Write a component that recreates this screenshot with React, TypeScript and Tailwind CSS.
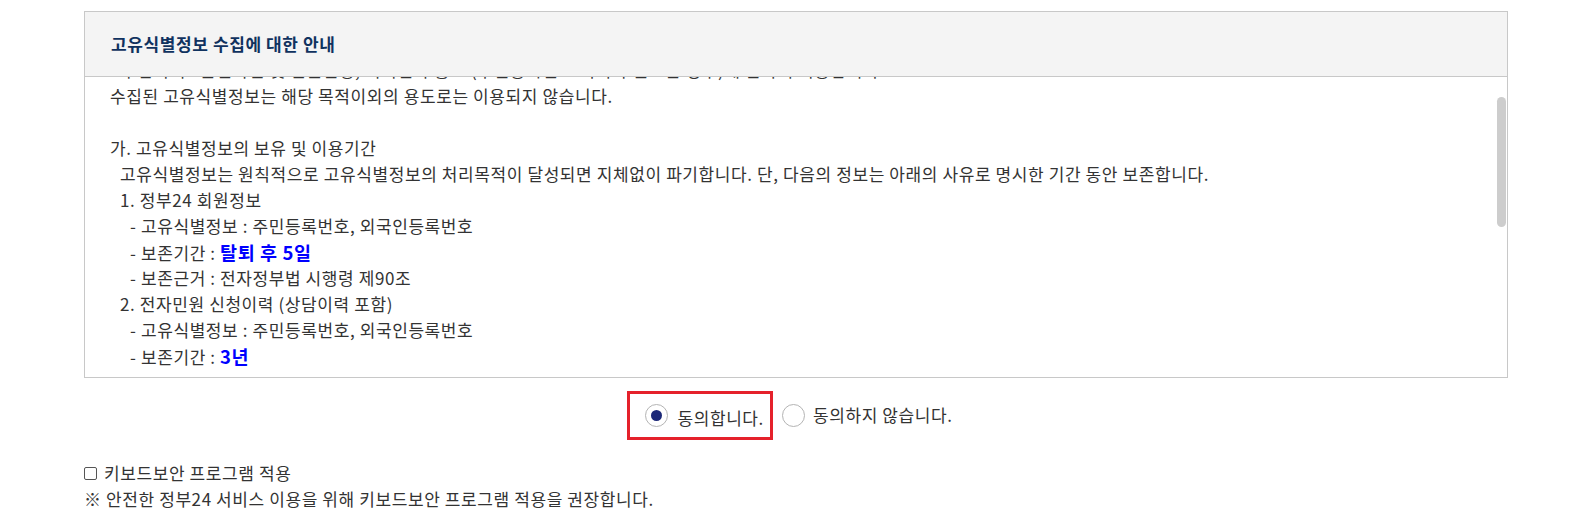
import React, { useEffect, useRef, useState } from 'react'

type Line = { indent: number; text: string; strong?: string }

const lines: Line[] = [
  { indent: 0, text: '정부24는 민원 신청 및 처리를 위하여 아래와 같이 고유식별정보를 수집·이용합니다.' },
  { indent: 0, text: '- 수집목적 : 본인확인 및 민원신청, 처리결과 통보 (주민등록번호 처리가 필요한 경우)에 한하여 이용합니다.' },
  { indent: 0, text: '수집된 고유식별정보는 해당 목적이외의 용도로는 이용되지 않습니다.' },
  { indent: 0, text: '' },
  { indent: 0, text: '가. 고유식별정보의 보유 및 이용기간' },
  { indent: 1, text: '고유식별정보는 원칙적으로 고유식별정보의 처리목적이 달성되면 지체없이 파기합니다. 단, 다음의 정보는 아래의 사유로 명시한 기간 동안 보존합니다.' },
  { indent: 1, text: '1. 정부24 회원정보' },
  { indent: 2, text: '- 고유식별정보 : 주민등록번호, 외국인등록번호' },
  { indent: 2, text: '- 보존기간 : ', strong: '탈퇴 후 5일' },
  { indent: 2, text: '- 보존근거 : 전자정부법 시행령 제90조' },
  { indent: 1, text: '2. 전자민원 신청이력 (상담이력 포함)' },
  { indent: 2, text: '- 고유식별정보 : 주민등록번호, 외국인등록번호' },
  { indent: 2, text: '- 보존기간 : ', strong: '3년' },
  { indent: 2, text: '- 보존근거 : 민원 처리에 관한 법률 시행령 제24조' },
  { indent: 1, text: '3. 인터넷 발급문서 진위확인 정보' },
  { indent: 2, text: '- 고유식별정보 : 주민등록번호, 외국인등록번호' },
  { indent: 2, text: '- 보존기간 : ', strong: '5년' },
  { indent: 2, text: '- 보존근거 : 전자정부법 제28조' },
  { indent: 0, text: '' },
  { indent: 0, text: '나. 동의를 거부할 권리 및 동의를 거부할 경우의 불이익' },
  { indent: 1, text: '위 고유식별정보 수집에 대한 동의를 거부할 권리가 있습니다.' },
  { indent: 1, text: '그러나 동의를 거부할 경우 민원 신청 및 처리가 제한될 수 있습니다.' },
  { indent: 0, text: '' },
  { indent: 0, text: '다. 고유식별정보 처리의 근거' },
  { indent: 1, text: '개인정보 보호법 제24조 및 민원 처리에 관한 법률 시행령 제58조' },
  { indent: 0, text: '' },
]

const indentClass = ['pl-0', 'pl-[10px]', 'pl-[20px]']

function Radio({ checked }: { checked: boolean }) {
  return (
    <span className="flex h-[23px] w-[23px] shrink-0 items-center justify-center rounded-full border border-[#b4b4b4] bg-white">
      {checked && <span className="h-[11px] w-[11px] rounded-full bg-[#1c2878]" />}
    </span>
  )
}

export default function App() {
  const [agree, setAgree] = useState(true)
  const boxRef = useRef<HTMLDivElement>(null)

  useEffect(() => {
    if (boxRef.current) boxRef.current.scrollTop = 46
  }, [])

  return (
    <div className="min-h-screen bg-white pt-[11px] font-['Noto_Sans_CJK_KR',sans-serif] text-[17px] tracking-[0.6px] text-[#333]">
      {/* 안내 박스 */}
      <div className="ml-[84px] w-[1424px] border border-[#c8c8c8]">
        <div className="flex h-[65px] items-center border-b border-[#c8c8c8] bg-[#f4f4f4] pl-[26px]">
          <h2 className="text-[17px] font-bold text-[#10325f]">고유식별정보 수집에 대한 안내</h2>
        </div>
        <div className="relative h-[300px] pb-[8px]">
          <div
            ref={boxRef}
            className="h-full overflow-y-auto pl-[25px] pr-4 [scrollbar-width:none]"
          >
            {lines.map((l, i) => (
              <p key={i} className={`h-[26px] leading-[26px] whitespace-nowrap ${indentClass[l.indent]}`}>
                {l.text || '\u00a0'}
                {l.strong && <strong className="text-[18.5px] font-bold text-[#0000ff]">{l.strong}</strong>}
              </p>
            ))}
          </div>
          {/* 스크롤바 */}
          <div className="absolute right-[1px] top-[20px] h-[130px] w-[9px] rounded-full bg-[#cdcdcd]" />
        </div>
      </div>

      {/* 동의 여부 */}
      <div className="mt-[13px] flex items-center justify-center pl-[8px]">
        <label
          className="flex h-[49px] cursor-pointer items-center border-[3px] border-[#e5212b] pl-[15px] pr-[6px]"
          onClick={() => setAgree(true)}
        >
          <Radio checked={agree} />
          <span className="ml-[9px] mt-[5px]">동의합니다.</span>
        </label>
        <label className="ml-[9px] flex cursor-pointer items-center" onClick={() => setAgree(false)}>
          <Radio checked={!agree} />
          <span className="ml-[8px] mt-[-1px]">동의하지 않습니다.</span>
        </label>
      </div>

      {/* 키보드보안 */}
      <div className="ml-[84px] mt-[20px]">
        <label className="flex h-[26px] items-center">
          <span className="h-[13px] w-[13px] rounded-[2px] border border-[#555] bg-white" />
          <span className="ml-[7px]">키보드보안 프로그램 적용</span>
        </label>
        <p className="h-[26px] leading-[26px]">※ 안전한 정부24 서비스 이용을 위해 키보드보안 프로그램 적용을 권장합니다.</p>
      </div>
    </div>
  )
}
